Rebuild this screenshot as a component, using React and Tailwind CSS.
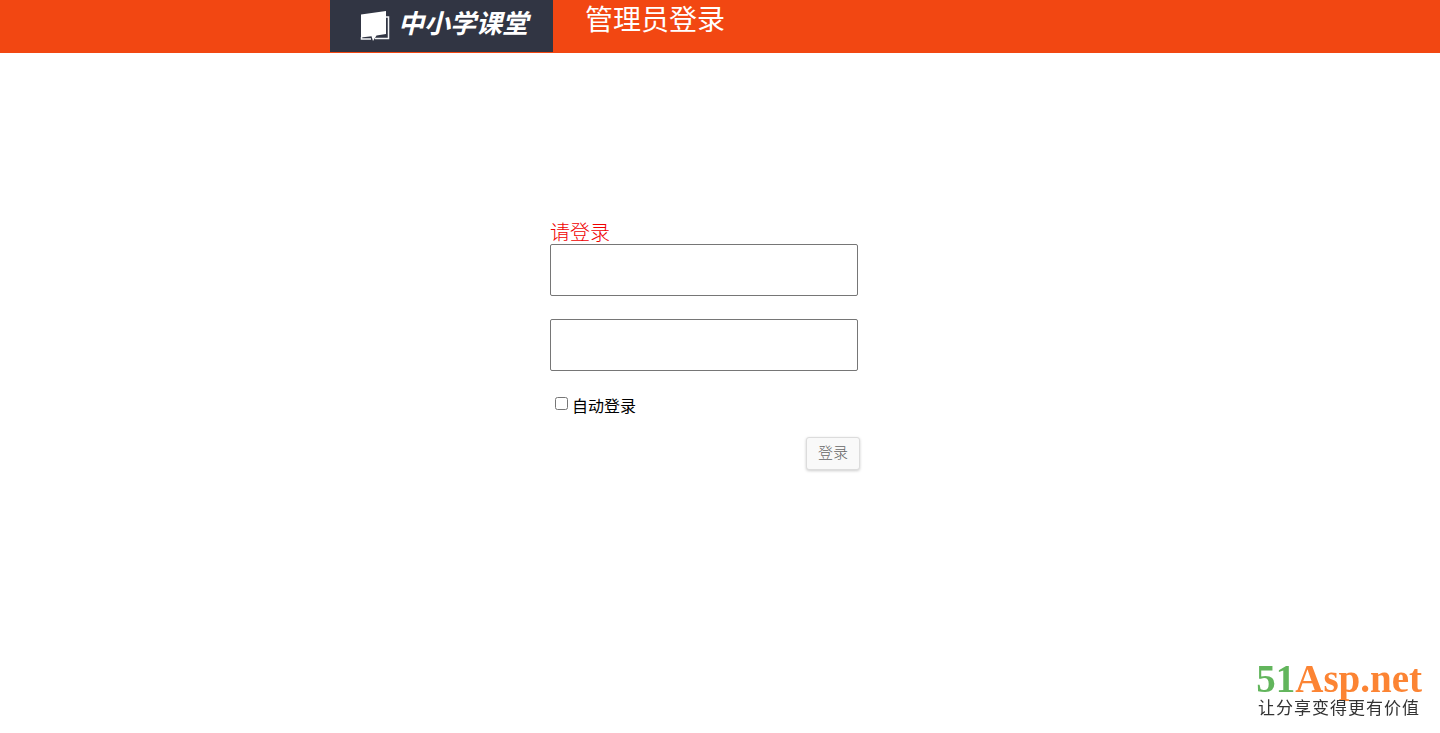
import { useState } from 'react'

// White book with a page corner folding out below it
function BookIcon() {
  return (
    <svg width="30" height="32" viewBox="0 0 30 32" aria-hidden="true">
      <path d="M25 7 H28.5 V28.5 H15 M1.5 27 V29 H11" fill="none" stroke="#f4f5f7" strokeWidth="1.5" />
      <path d="M1 4.5 L26 1 V24 L16.5 25.5 L13 31 L11.5 26.2 L1 27.5 Z" fill="#fff" />
    </svg>
  )
}

function Header() {
  return (
    <header className="bg-[#f24712]">
      <div className="mx-auto flex h-[53px] max-w-[780px] items-start">
        <a
          href="/"
          className="flex h-[52px] w-[223px] shrink-0 items-start gap-2 bg-[#313543] pt-[10px] pl-[30px] text-white"
        >
          <BookIcon />
          <span className="-mt-1 text-[26px] leading-8 font-bold italic">中小学课堂</span>
        </a>
        <h1 className="ml-8 text-[28px] leading-9 font-normal whitespace-nowrap text-white">
          管理员登录
        </h1>
      </div>
    </header>
  )
}

function LoginForm() {
  const [account, setAccount] = useState('')
  const [password, setPassword] = useState('')
  const [remember, setRemember] = useState(false)

  const inputClass =
    'block h-[52px] w-[308px] rounded-[2px] border border-[#767676] bg-white px-2 text-base outline-none'

  return (
    <form className="w-[310px]" onSubmit={(e) => e.preventDefault()}>
      <p className="text-[20px] leading-6 font-light text-[#f00000]">请登录</p>
      <input
        type="text"
        aria-label="账号"
        className={inputClass}
        value={account}
        onChange={(e) => setAccount(e.target.value)}
      />
      <input
        type="password"
        aria-label="密码"
        className={`${inputClass} mt-[23px]`}
        value={password}
        onChange={(e) => setPassword(e.target.value)}
      />
      <div className="mt-6 flex items-center gap-1 pl-[5px]">
        <input
          id="remember"
          type="checkbox"
          className="-mt-1 size-[13px]"
          checked={remember}
          onChange={(e) => setRemember(e.target.checked)}
        />
        <label htmlFor="remember" className="text-[16px] leading-5 font-normal text-black">
          自动登录
        </label>
      </div>
      <div className="mt-[22px] flex justify-end">
        <button
          type="submit"
          className="h-[33px] w-[54px] rounded-[3px] border border-[#dcdcdc] bg-[#f9f9f9] pb-[2px] text-[15px] font-light text-[#666] shadow-[0_1px_3px_rgba(0,0,0,0.2)]"
        >
          登录
        </button>
      </div>
    </form>
  )
}

// Site mark pinned to the bottom right corner of the window
function SiteMark() {
  return (
    <div className="fixed right-[18px] bottom-[14px] text-center">
      <div className="font-['Liberation_Serif','DejaVu_Serif',serif] text-[39px] leading-8 font-bold">
        <span className="text-[#62b55c]">51</span>
        <span className="text-[#fc8433]">Asp.net</span>
      </div>
      <div className="text-[17px] leading-6 tracking-[1px] text-[#333]">让分享变得更有价值</div>
    </div>
  )
}

export default function App() {
  return (
    <div className="min-h-screen bg-white font-['Noto_Sans_CJK_SC',sans-serif]">
      <Header />
      <main className="mx-auto max-w-[780px] pt-[167px] pl-[220px]">
        <LoginForm />
      </main>
      <SiteMark />
    </div>
  )
}
